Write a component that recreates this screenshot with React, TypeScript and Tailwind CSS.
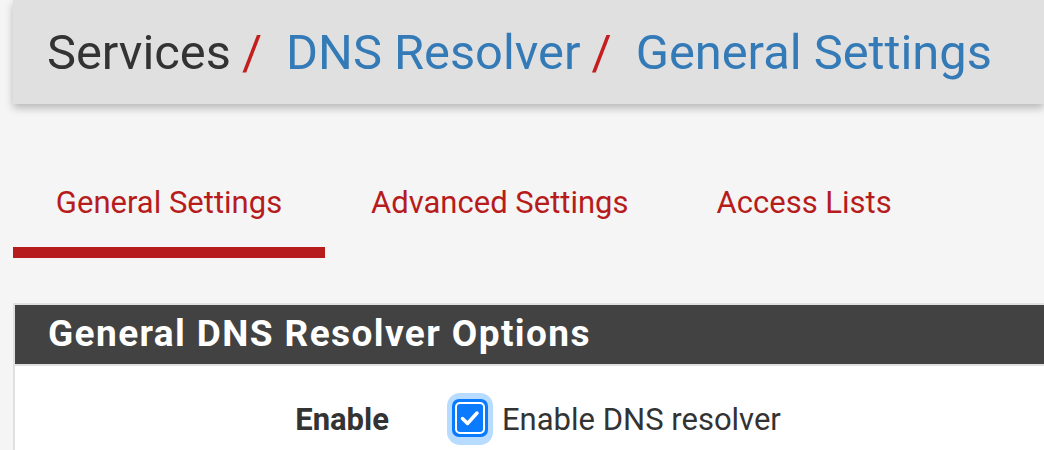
import React from "react";

export default function App() {
  return (
    <div className="w-[1044px] h-[450px] overflow-hidden bg-[#f5f5f5] font-['Roboto',sans-serif]">
      <div className="ml-[13px] h-[104px] bg-[#e0e0e0] shadow-[0_4px_8px_rgba(0,0,0,0.25)] flex items-center pl-[34px] pt-[2px]">
        <div className="text-[48.8px] leading-none whitespace-nowrap text-[#333]">
          <span>Services</span>
          <span className="text-[#c41e1e] ml-[11px] mr-[24px]">/</span>
          <span className="text-[#337ab7]">DNS Resolver</span>
          <span className="text-[#c41e1e] ml-[11px] mr-[24px]">/</span>
          <span className="text-[#337ab7]">General Settings</span>
        </div>
      </div>

      <div className="ml-[13px] mt-[83px] flex text-[#b71c1c] text-[31px] leading-none whitespace-nowrap">
        <div className="w-[312px] pb-[29px] border-b-[11px] border-[#b71c1c] flex justify-center">General Settings</div>
        <div className="pl-[46px] pr-[44px] pb-[29px]">Advanced Settings</div>
        <div className="px-[44px] pb-[29px]">Access Lists</div>
      </div>

      <div className="ml-[13px] mt-[45px] border-[2px] border-r-0 border-[#e0e0e0] bg-white">
        <div className="h-[61px] bg-[#424242] border-b-[2px] border-[#e0e0e0] flex items-center pl-[33px] pb-[3px]">
          <span className="text-white font-bold text-[37px] tracking-[1.4px] leading-none whitespace-nowrap">General DNS Resolver Options</span>
        </div>
        <div className="flex items-center h-[106px]">
          <div className="w-[374px] text-right font-bold text-[31px] text-[#333] leading-none">Enable</div>
          <div className="ml-[57px] flex items-center">
            <svg width="50" height="54" viewBox="0 0 50 54" className="shrink-0">
              <rect x="1" y="1" width="46" height="52" rx="13" fill="#b8dcff" />
              <rect x="6" y="7" width="36" height="38" rx="7" fill="#0a7aff" />
              <rect x="10" y="11" width="28" height="30" rx="4" fill="none" stroke="#fff" strokeWidth="2" />
              <path d="M16.5 26.5 L21.5 31.5 L31 21" fill="none" stroke="#fff" strokeWidth="3.5" strokeLinecap="round" strokeLinejoin="round" />
            </svg>
            <span className="ml-[6px] text-[31px] text-[#333] leading-none whitespace-nowrap">Enable DNS resolver</span>
          </div>
        </div>
      </div>
    </div>
  );
}
